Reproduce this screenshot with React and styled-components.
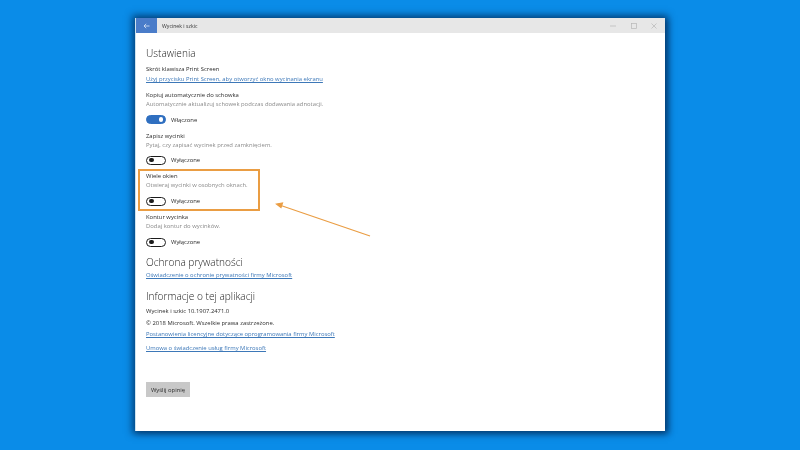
import React from "react";
import styled, { createGlobalStyle } from "styled-components";

const Global = createGlobalStyle`
  html, body { margin: 0; padding: 0; }
  body { width: 800px; height: 450px; overflow: hidden; background: #0a8ce8; font-family: "Open Sans", "Noto Sans", "Liberation Sans", sans-serif; }
`;

const Desktop = styled.div`
  position: relative;
  width: 800px;
  height: 450px;
  padding: 18px 135px 19px;
  box-sizing: border-box;
  background: #0a8ce8;
`;

const Window = styled.div`
  position: relative;
  height: 413px;
  background: #fff;
  border-left: 1px solid #cfe3ee;
  box-sizing: border-box;
  box-shadow: 0 0 7px 3px rgba(0, 30, 70, 0.62), 3px 2px 6px rgba(0, 30, 70, 0.35);
  display: flex;
  flex-direction: column;
`;

const TitleBar = styled.header`
  height: 15px;
  flex: none;
  display: flex;
  align-items: center;
  background: #e7e7e7;
`;

const BackButton = styled.div`
  width: 21px;
  height: 15px;
  background: #4a7cc9;
  display: flex;
  align-items: center;
  justify-content: center;
`;

const WindowTitle = styled.span`
  margin-left: 5px;
  flex: 1;
  font-size: 5.2px;
  color: #333;
  filter: blur(0.25px);
`;

const Controls = styled.div`
  display: flex;
  align-items: center;
  gap: 14.5px;
  padding-right: 8px;
  opacity: 0.8;
`;

const Content = styled.main`
  padding: 13px 0 0 10px;
  display: flex;
  flex-direction: column;
  align-items: flex-start;
  filter: blur(0.3px);
`;

const Heading = styled.h2`
  margin: ${(p) => p.$top || 0}px 0 0;
  height: 14px;
  line-height: 14px;
  font-size: 10.15px;
  font-weight: 300;
  color: #222;
  white-space: nowrap;
`;

const Label = styled.div`
  margin: ${(p) => p.$top || 0}px 0 0;
  height: 9px;
  line-height: 9px;
  font-size: 5.88px;
  color: #2b2b2b;
  white-space: nowrap;
`;

const Hint = styled(Label)`
  color: #8a8a8a;
`;

const LinkText = styled.a`
  display: block;
  margin: ${(p) => p.$top || 0}px 0 0;
  height: 9px;
  line-height: 9px;
  font-size: 5.88px;
  color: #3d78b8;
  text-decoration: underline;
  text-decoration-thickness: 0.5px;
  white-space: nowrap;
`;

const ToggleRow = styled.div`
  margin-top: ${(p) => p.$top || 6}px;
  height: 9px;
  display: flex;
  align-items: center;
  gap: 5px;
  font-size: 5.88px;
  color: #2b2b2b;
`;

const Track = styled.span`
  width: 20px;
  height: 9px;
  box-sizing: border-box;
  border-radius: 4.5px;
  border: 1.2px solid ${(p) => (p.$on ? "#2f6fc0" : "#1c1c1c")};
  background: ${(p) => (p.$on ? "#2f6fc0" : "#fff")};
  display: flex;
  align-items: center;
  justify-content: ${(p) => (p.$on ? "flex-end" : "flex-start")};
  padding: 0 2px;
`;

const Knob = styled.span`
  width: 4.5px;
  height: 4.5px;
  border-radius: 50%;
  background: ${(p) => (p.$on ? "#fff" : "#1c1c1c")};
`;

const FeedbackButton = styled.button`
  margin-top: 29px;
  width: 44px;
  height: 15px;
  padding: 0;
  border: 0;
  background: #c8c8c8;
  color: #2b2b2b;
  font: inherit;
  font-size: 5.88px;
`;

const Highlight = styled.div`
  position: absolute;
  left: 2px;
  top: 151px;
  width: 122px;
  height: 42px;
  box-sizing: border-box;
  border: 2px solid #ea9d43;
`;

const Arrow = styled.svg`
  position: absolute;
  left: 135px;
  top: 180px;
  filter: blur(0.25px);
`;

function Toggle({ on, top }) {
  return (
    <ToggleRow $top={top}>
      <Track $on={on}><Knob $on={on} /></Track>
      {on ? "Włączone" : "Wyłączone"}
    </ToggleRow>
  );
}

export default function App() {
  return (
    <Desktop>
      <Global />
      <Window>
        <TitleBar>
          <BackButton>
            <svg width="7" height="6" viewBox="0 0 7 6" fill="none" stroke="#dfe8f6" strokeWidth="0.8">
              <path d="M6.5 3H1M3.2 .8 1 3l2.2 2.2" />
            </svg>
          </BackButton>
          <WindowTitle>Wycinek i szkic</WindowTitle>
          <Controls>
            <svg width="6" height="6" viewBox="0 0 6 6" stroke="#aaa" strokeWidth="0.7"><path d="M0 3h6" /></svg>
            <svg width="6" height="6" viewBox="0 0 6 6" fill="none" stroke="#aaa" strokeWidth="0.7"><rect x=".5" y=".5" width="5" height="5" /></svg>
            <svg width="6" height="6" viewBox="0 0 6 6" stroke="#aaa" strokeWidth="0.7"><path d="M.5 .5l5 5M5.5 .5l-5 5" /></svg>
          </Controls>
        </TitleBar>
        <Content>
          <Heading>Ustawienia</Heading>
          <Label $top={5}>Skrót klawisza Print Screen</Label>
          <LinkText $top={1}>Użyj przycisku Print Screen, aby otworzyć okno wycinania ekranu</LinkText>
          <Label $top={7}>Kopiuj automatycznie do schowka</Label>
          <Hint>Automatycznie aktualizuj schowek podczas dodawania adnotacji.</Hint>
          <Toggle on top={6} />
          <Label $top={7.5}>Zapisz wycinki</Label>
          <Hint>Pytaj, czy zapisać wycinek przed zamknięciem.</Hint>
          <Toggle />
          <Label $top={7.5}>Wiele okien</Label>
          <Hint>Otwieraj wycinki w osobnych oknach.</Hint>
          <Toggle top={6.5} />
          <Label $top={7.5}>Kontur wycinka</Label>
          <Hint>Dodaj kontur do wycinków.</Hint>
          <Toggle top={6.5} />
          <Heading $top={8.5}>Ochrona prywatności</Heading>
          <LinkText $top={2}>Oświadczenie o ochronie prywatności firmy Microsoft</LinkText>
          <Heading $top={9}>Informacje o tej aplikacji</Heading>
          <Label $top={4}>Wycinek i szkic 10.1907.2471.0</Label>
          <Label $top={3}>© 2018 Microsoft. Wszelkie prawa zastrzeżone.</Label>
          <LinkText $top={2}>Postanowienia licencyjne dotyczące oprogramowania firmy Microsoft</LinkText>
          <LinkText $top={5}>Umowa o świadczenie usług firmy Microsoft</LinkText>
          <FeedbackButton>Wyślij opinię</FeedbackButton>
        </Content>
        <Highlight />
      </Window>
      <Arrow width="240" height="60" viewBox="0 0 240 60" fill="none" stroke="#ea9d43" strokeWidth="1.2">
        <path d="M235 56 143 24.5" />
        <path d="M141.5 24 147.5 23 146 27.5Z" fill="#ea9d43" />
      </Arrow>
    </Desktop>
  );
}
